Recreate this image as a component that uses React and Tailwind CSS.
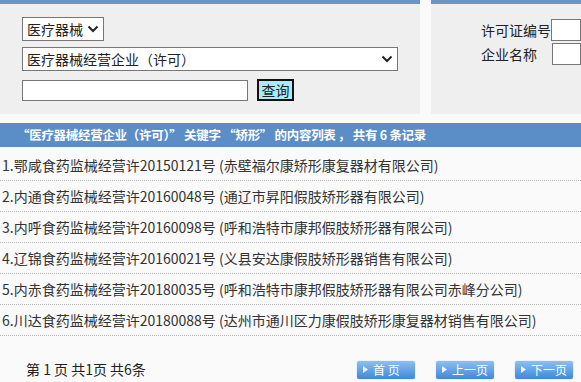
import React from 'react';

const rows = [
  '1.鄂咸食药监械经营许20150121号 (赤壁福尔康矫形康复器材有限公司)',
  '2.内通食药监械经营许20160048号 (通辽市昇阳假肢矫形器有限公司)',
  '3.内呼食药监械经营许20160098号 (呼和浩特市康邦假肢矫形器有限公司)',
  '4.辽锦食药监械经营许20160021号 (义县安达康假肢矫形器销售有限公司)',
  '5.内赤食药监械经营许20180035号 (呼和浩特市康邦假肢矫形器有限公司赤峰分公司)',
  '6.川达食药监械经营许20180088号 (达州市通川区力康假肢矫形康复器材销售有限公司)',
];

function Chevron() {
  return (
    <svg width="12" height="8" viewBox="0 0 12 8" className="shrink-0">
      <path d="M1.5 1.5 L6 6 L10.5 1.5" fill="none" stroke="#222" strokeWidth="2" />
    </svg>
  );
}

function PageButton({ label }) {
  return (
    <div className="flex h-[18px] w-[58px] items-center gap-[5px] rounded-[2px] bg-gradient-to-b from-[#8cc0ef] to-[#3f87d8] pl-[6px] text-[12px] leading-none text-white shadow-[0_0_1px_#6aa0d8]">
      <svg width="5" height="7" viewBox="0 0 5 7">
        <path d="M0 0 L5 3.5 L0 7 Z" fill="#e8f4ff" />
      </svg>
      <span>{label}</span>
    </div>
  );
}

export default function App() {
  return (
    <div className="h-[382px] w-[581px] overflow-hidden bg-[#fafafa] font-['Noto_Sans_CJK_SC','Microsoft_YaHei',sans-serif] text-[#333]">
      <div className="flex h-[114px] gap-[11px]">
        <div className="w-[420px] border-t-4 border-[#6b97c7] bg-[#efefef] pl-[22px] pt-[13px]">
          <div className="flex h-[24px] w-[82px] items-center justify-between border border-[#777] bg-white px-[4px] text-[14px] text-[#222]">
            <span>医疗器械</span>
            <Chevron />
          </div>
          <div className="mt-[6px] flex h-[24px] w-[376px] items-center justify-between border border-[#777] bg-white px-[4px] text-[14px] text-[#222]">
            <span>医疗器械经营企业（许可）</span>
            <Chevron />
          </div>
          <div className="mt-[8px] flex items-center gap-[9px]">
            <div className="h-[21px] w-[226px] border border-[#777] bg-white" />
            <div className="flex h-[22px] w-[37px] items-center justify-center border-2 border-[#111] bg-[#a6ecfa] text-[14px] leading-none text-[#222]">
              查询
            </div>
          </div>
        </div>
        <div className="flex-1 border-t-4 border-[#6b97c7] bg-[#efefef] pl-[50px] pt-[15px] text-[14px] text-[#222]">
          <div className="flex h-[22px] items-center">
            <span className="w-[70px]">许可证编号</span>
            <div className="h-[22px] flex-1 border border-[#777] bg-white" />
          </div>
          <div className="mt-[2px] flex h-[22px] items-center">
            <span className="w-[71px]">企业名称</span>
            <div className="h-[22px] flex-1 border border-[#777] bg-white" />
          </div>
        </div>
      </div>

      <div className="mt-[9px] flex h-[24px] items-center bg-[#5b8dc7] pl-[17px] text-[12.5px] font-bold tracking-[-0.3px] text-white">
        “医疗器械经营企业（许可）” 关键字 “矫形” 的内容列表 ， 共有 6 条记录
      </div>

      <div className="pt-[3px]">
        {rows.map((r) => (
          <div
            key={r}
            className="flex h-[31px] items-center border-b border-dotted border-[#b8b8b8] pl-[2px] text-[14px] whitespace-nowrap"
          >
            {r}
          </div>
        ))}
      </div>

      <div className="flex items-center pt-[23px] pr-[8px]">
        <span className="pl-[26px] text-[14px] text-[#222]">第 1 页 共1页 共6条</span>
        <div className="ml-auto flex gap-[21px]">
          <PageButton label="首 页" />
          <PageButton label="上一页" />
          <PageButton label="下一页" />
        </div>
      </div>
    </div>
  );
}
